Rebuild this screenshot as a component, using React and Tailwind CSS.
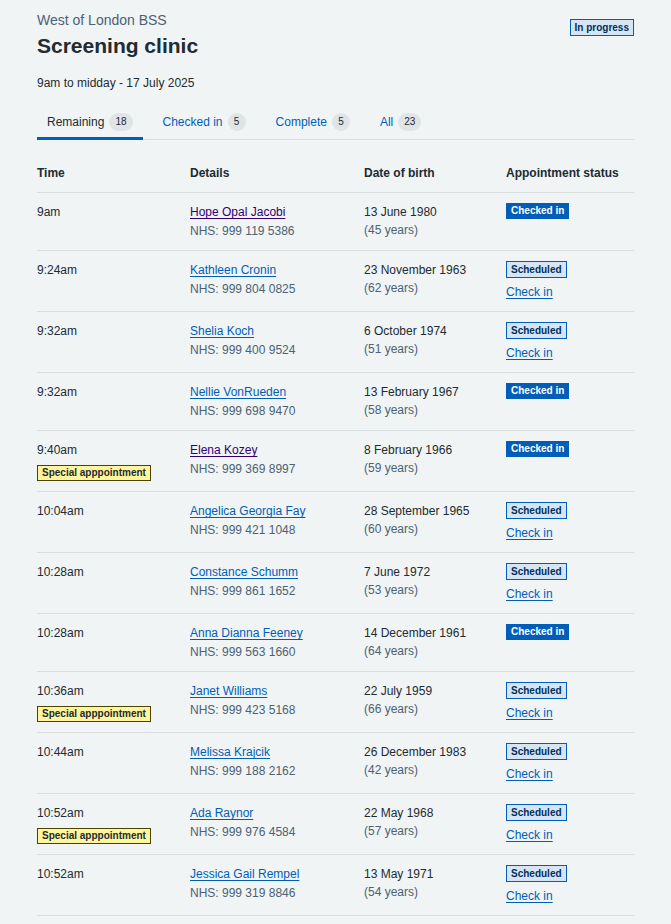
import React from 'react';

const rows = [
  { time: '9am', name: 'Hope Opal Jacobi', nhs: '999 119 5386', dob: '13 June 1980', age: 45, status: 'checked', visited: true },
  { time: '9:24am', name: 'Kathleen Cronin', nhs: '999 804 0825', dob: '23 November 1963', age: 62, status: 'scheduled' },
  { time: '9:32am', name: 'Shelia Koch', nhs: '999 400 9524', dob: '6 October 1974', age: 51, status: 'scheduled' },
  { time: '9:32am', name: 'Nellie VonRueden', nhs: '999 698 9470', dob: '13 February 1967', age: 58, status: 'checked' },
  { time: '9:40am', name: 'Elena Kozey', nhs: '999 369 8997', dob: '8 February 1966', age: 59, status: 'checked', visited: true, special: true },
  { time: '10:04am', name: 'Angelica Georgia Fay', nhs: '999 421 1048', dob: '28 September 1965', age: 60, status: 'scheduled' },
  { time: '10:28am', name: 'Constance Schumm', nhs: '999 861 1652', dob: '7 June 1972', age: 53, status: 'scheduled' },
  { time: '10:28am', name: 'Anna Dianna Feeney', nhs: '999 563 1660', dob: '14 December 1961', age: 64, status: 'checked' },
  { time: '10:36am', name: 'Janet Williams', nhs: '999 423 5168', dob: '22 July 1959', age: 66, status: 'scheduled', special: true },
  { time: '10:44am', name: 'Melissa Krajcik', nhs: '999 188 2162', dob: '26 December 1983', age: 42, status: 'scheduled' },
  { time: '10:52am', name: 'Ada Raynor', nhs: '999 976 4584', dob: '22 May 1968', age: 57, status: 'scheduled', special: true },
  { time: '10:52am', name: 'Jessica Gail Rempel', nhs: '999 319 8846', dob: '13 May 1971', age: 54, status: 'scheduled' },
];

const tabs = [
  { label: 'Remaining', count: 18, active: true },
  { label: 'Checked in', count: 5 },
  { label: 'Complete', count: 5 },
  { label: 'All', count: 23 },
];

const BlueTag = ({ children }) => (
  <span className="block w-fit border border-[#005eb8] bg-[#d6e5f3] px-[4px] text-[10px] leading-[15px] font-bold text-[#002f5c]">
    {children}
  </span>
);

const App = () => {
  return (
    <div className="min-h-[924px] bg-[#f0f4f5] px-[37px] pt-[11px] text-[#212b32] font-['Liberation_Sans',Arial,sans-serif]">
      {/* Header */}
      <div className="flex items-start justify-between">
        <div>
          <div className="text-[14px] leading-[18px] text-[#4c6272]">West of London BSS</div>
          <h1 className="mt-[2px] text-[21px] leading-[30px] font-bold">Screening clinic</h1>
        </div>
        <div className="mt-[8px]">
          <BlueTag>In progress</BlueTag>
        </div>
      </div>
      <p className="mt-[13px] text-[12px] leading-[18px]">9am to midday - 17 July 2025</p>

      {/* Tabs */}
      <div className="mt-[18px] flex border-b border-[#d8dde0]">
        {tabs.map((t) => (
          <div
            key={t.label}
            className={`mr-[10px] flex items-center gap-[5px] px-[10px] pb-[6px] pt-[3px] border-b-[3px] -mb-px ${t.active ? 'border-[#005eb8] text-[#212b32]' : 'border-transparent text-[#005eb8]'}`}
          >
            <span className="text-[12px] leading-[18px]">{t.label}</span>
            <span className="min-w-[18px] rounded-full bg-[#dfe4e7] px-[6px] text-center text-[10px] leading-[18px] text-[#212b32]">{t.count}</span>
          </div>
        ))}
      </div>

      {/* Table */}
      <div className="mt-[24px] text-[12px]">
        <div className="grid grid-cols-[153px_174px_142px_1fr] border-b border-[#d8dde0] pb-[10px] font-bold leading-[18px]">
          <div>Time</div>
          <div>Details</div>
          <div>Date of birth</div>
          <div>Appointment status</div>
        </div>
        {rows.map((r, i) => (
          <div key={i} className="grid grid-cols-[153px_174px_142px_1fr] border-b border-[#d8dde0] pt-[10px] pb-[10px] leading-[18px]">
            <div>
              <div>{r.time}</div>
              {r.special && (
                <span className="mt-[6px] block w-fit border border-[#4a4400] bg-[#fff59d] px-[4px] text-[10px] leading-[14px] font-bold text-[#212b32]">
                  Special apppointment
                </span>
              )}
            </div>
            <div>
              <a href="#" className={`underline underline-offset-2 ${r.visited ? 'text-[#330072]' : 'text-[#005eb8]'}`}>
                {r.name}
              </a>
              <div className="mt-[1px] text-[#4c6272]">NHS: {r.nhs}</div>
            </div>
            <div>
              <div>{r.dob}</div>
              <div className="text-[#4c6272]">({r.age} years)</div>
            </div>
            <div>
              {r.status === 'checked' ? (
                <span className="block w-fit bg-[#005eb8] px-[5px] text-[10px] leading-[16px] font-bold text-white">Checked in</span>
              ) : (
                <>
                  <BlueTag>Scheduled</BlueTag>
                  <div className="mt-[5px]">
                    <a href="#" className="text-[12px] text-[#005eb8] underline underline-offset-2">Check in</a>
                  </div>
                </>
              )}
            </div>
          </div>
        ))}
      </div>
    </div>
  );
};

export default App;
